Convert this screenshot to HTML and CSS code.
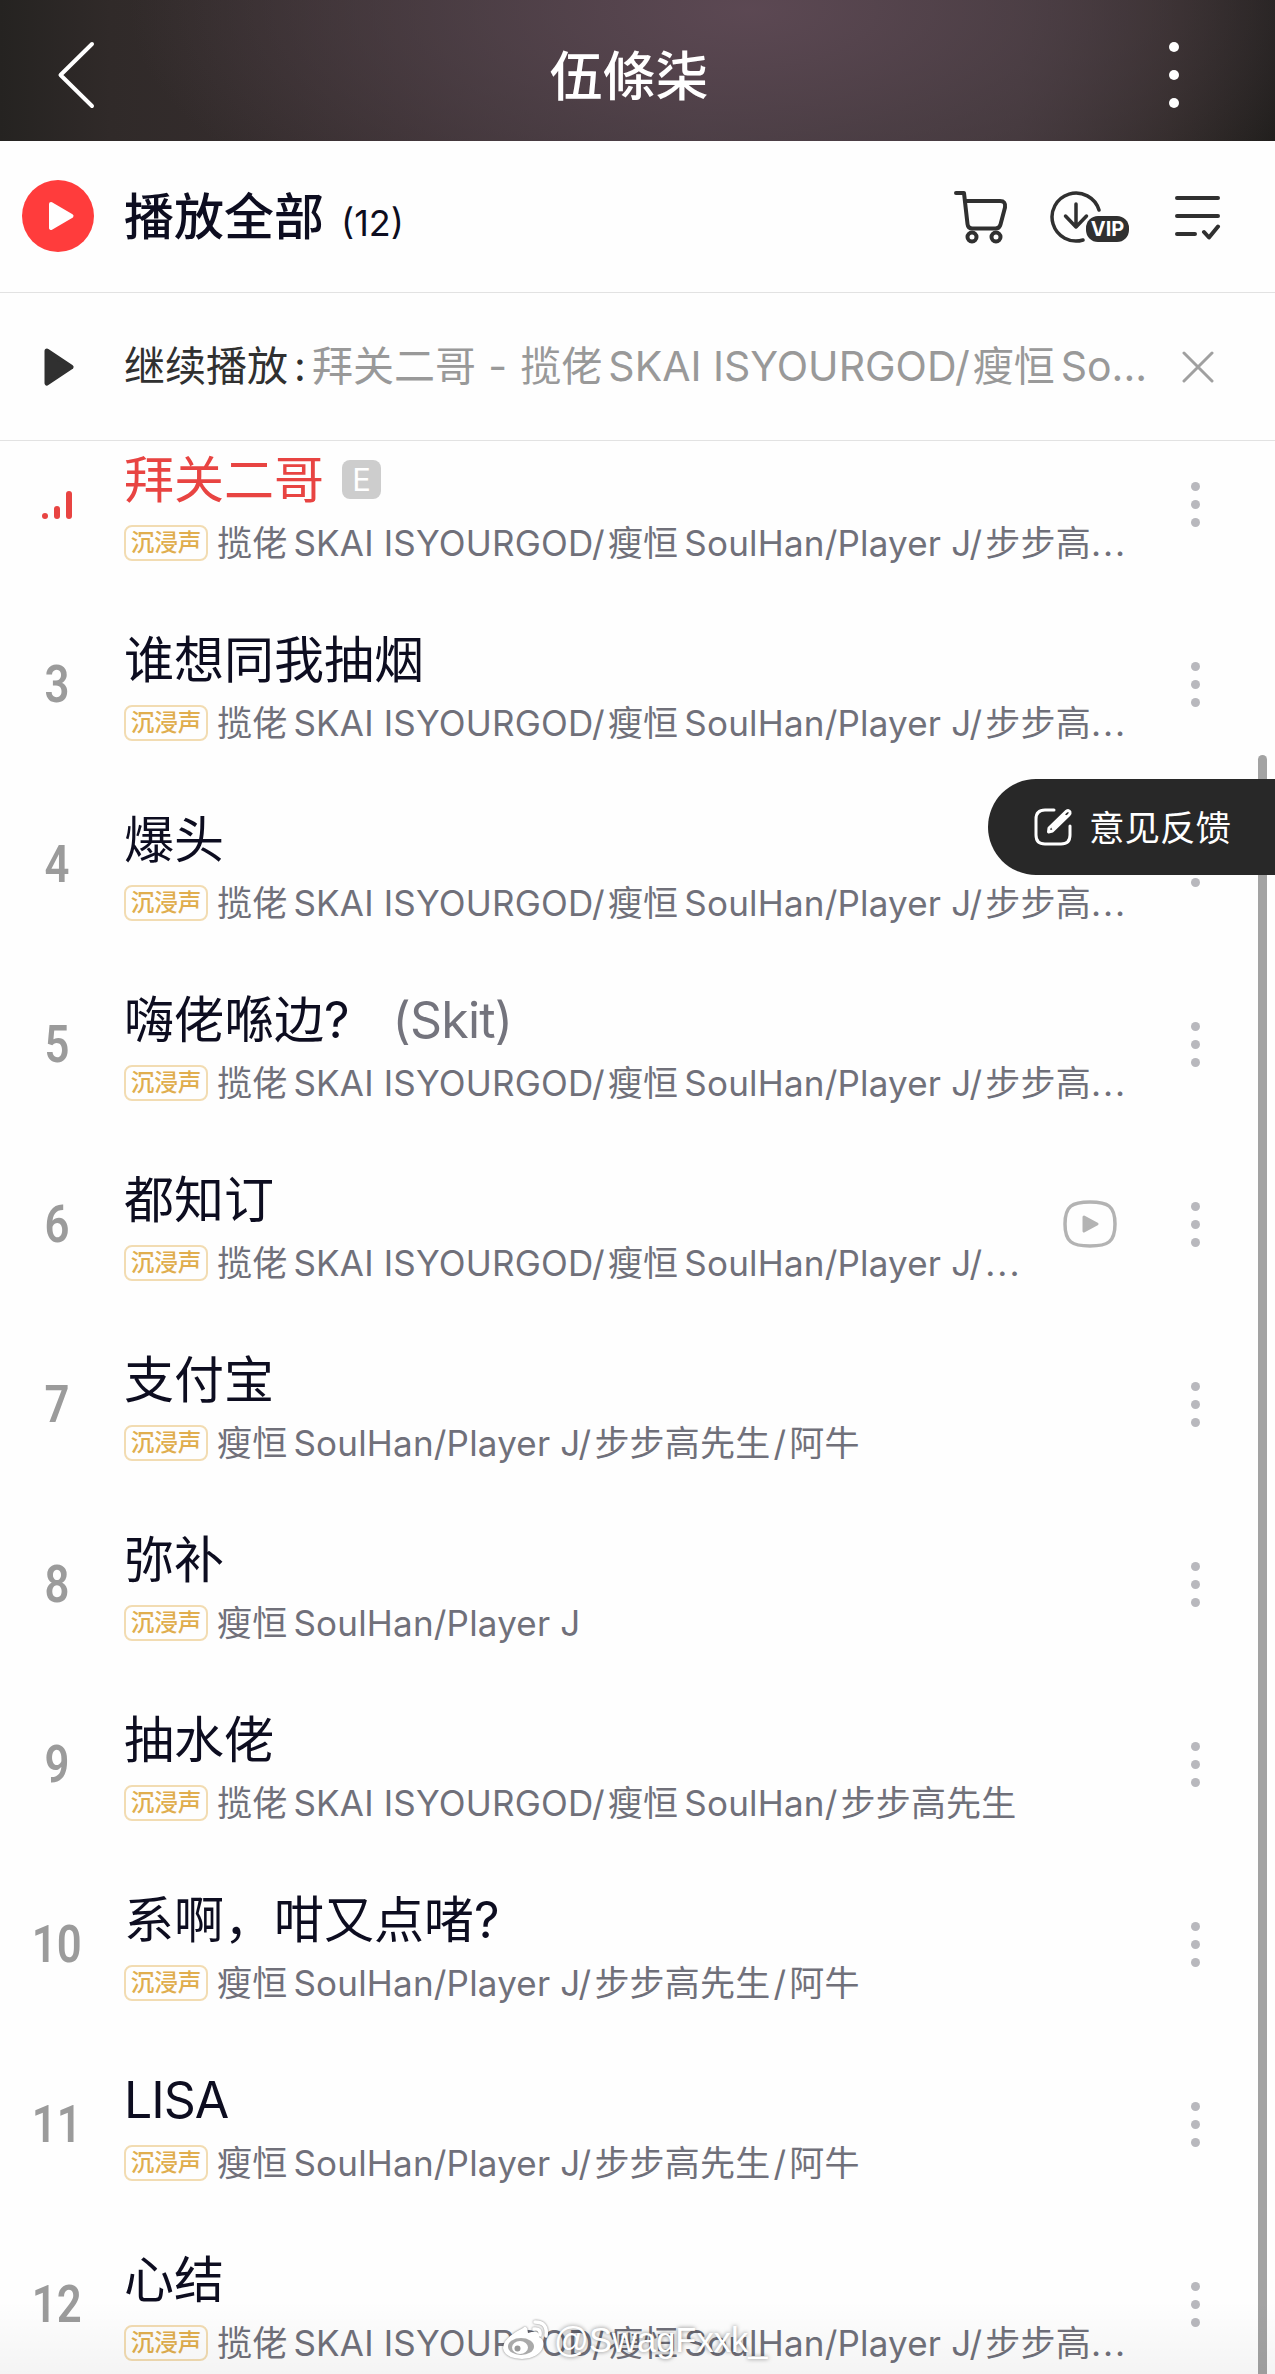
FILE: index.html
```html
<!DOCTYPE html>
<html lang="zh-CN">
<head>
  <meta charset="UTF-8" />
  <meta name="viewport" content="width=device-width, initial-scale=1.0"/>
  <title>伍條柒</title>
  <link rel="stylesheet" href="styles.css">
</head>
<body>
  <header class="header">
    <svg class="back" width="40" height="72" viewBox="0 0 40 72"><path d="M35 5 L3.500 36 L35 67"/></svg>
    <h1>伍條柒</h1>
    <div class="header-more"><i></i><i></i><i></i></div>
  </header>

  <div class="play-all">
    <svg class="play-btn" width="72" height="72" viewBox="0 0 72 72">
      <circle cx="36" cy="36" r="36" fill="#ff3c3c"/>
      <path d="M29 24 L49.500 36 L29 48 Z" fill="#fff" stroke="#fff" stroke-width="4" stroke-linejoin="round"/>
    </svg>
    <span class="play-label">播放全部</span>
    <span class="count">(12)</span>
    <div class="tools">
      <svg width="56" height="56" viewBox="0 0 56 56">
        <path d="M3 5 h8 l3.500 31 q.5 4.500 5 4.500 h23 q4 0 5 -4 l4.500 -17 q1 -6.500 -5 -6.500 h-35"/>
        <circle cx="19" cy="49" r="4.500"/>
        <circle cx="43" cy="49" r="4.500"/>
      </svg>
      <svg class="vip-download" width="80" height="56" viewBox="0 0 80 56">
        <path d="M49 22 A24 24 0 1 0 33 52"/>
        <path d="M26 16 v23 M15.500 28 L26 39 L36.500 28"/>
        <rect x="36" y="28" width="43" height="26" rx="12" fill="#303030" stroke="none"/>
        <text x="57.500" y="48" text-anchor="middle">VIP</text>
      </svg>
      <svg width="48" height="48" viewBox="0 0 48 48">
        <path d="M3 6 h41 M3 24 h41 M3 42 h18 M30 40 l5 5.500 L44 34.500"/>
      </svg>
    </div>
  </div>

  <div class="resume">
    <svg class="resume-play" width="30" height="38" viewBox="0 0 30 38"><path d="M3 3 L27 19 L3 35 Z"/></svg>
    <p>继续播放<b>:</b><span class="resume-song">拜关二哥<u> - </u>揽佬<i></i>SKAI ISYOURGOD/<s></s>瘦恒<i></i>So...</span></p>
    <svg class="close" width="32" height="32" viewBox="0 0 32 32"><path d="M2 2 L30 30 M30 2 L2 30"/></svg>
  </div>

  <ul class="songs">
    <li class="song playing">
      <div class="num"><span class="bar bar1"></span><span class="bar bar2"></span><span class="bar bar3"></span></div>
      <div class="info">
        <div class="title">拜关二哥<span class="explicit">E</span></div>
        <div class="artist"><span class="tag">沉浸声</span>揽佬<i></i>SKAI ISYOURGOD/<s></s>瘦恒<i></i>SoulHan/Player J/<s></s>步步高<span class="dots">...</span></div>
      </div>
      <div class="more"><i></i><i></i><i></i></div>
    </li>
    <li class="song">
      <div class="num"><span>3</span></div>
      <div class="info">
        <div class="title">谁想同我抽烟</div>
        <div class="artist"><span class="tag">沉浸声</span>揽佬<i></i>SKAI ISYOURGOD/<s></s>瘦恒<i></i>SoulHan/Player J/<s></s>步步高<span class="dots">...</span></div>
      </div>
      <div class="more"><i></i><i></i><i></i></div>
    </li>
    <li class="song">
      <div class="num"><span>4</span></div>
      <div class="info">
        <div class="title">爆头</div>
        <div class="artist"><span class="tag">沉浸声</span>揽佬<i></i>SKAI ISYOURGOD/<s></s>瘦恒<i></i>SoulHan/Player J/<s></s>步步高<span class="dots">...</span></div>
      </div>
      <div class="more"><i></i><i></i><i></i></div>
    </li>
    <li class="song">
      <div class="num"><span>5</span></div>
      <div class="info">
        <div class="title">嗨佬喺边?<span class="subtitle">(Skit)</span></div>
        <div class="artist"><span class="tag">沉浸声</span>揽佬<i></i>SKAI ISYOURGOD/<s></s>瘦恒<i></i>SoulHan/Player J/<s></s>步步高<span class="dots">...</span></div>
      </div>
      <div class="more"><i></i><i></i><i></i></div>
    </li>
    <li class="song">
      <div class="num"><span>6</span></div>
      <div class="info">
        <div class="title">都知订</div>
        <div class="artist"><span class="tag">沉浸声</span>揽佬<i></i>SKAI ISYOURGOD/<s></s>瘦恒<i></i>SoulHan/Player J/<s></s><span class="dots">...</span></div>
      </div>
      <svg class="mv" width="54" height="48" viewBox="0 0 54 48">
        <path d="M27 2 C45 2 52 6 52 24 C52 42 45 46 27 46 C9 46 2 42 2 24 C2 6 9 2 27 2 Z" fill="none" stroke="#b3b3b3" stroke-width="3.500"/>
        <path d="M21 17 L34 24 L21 31 Z" fill="#b3b3b3" stroke="#b3b3b3" stroke-width="3" stroke-linejoin="round"/>
      </svg>
      <div class="more"><i></i><i></i><i></i></div>
    </li>
    <li class="song">
      <div class="num"><span>7</span></div>
      <div class="info">
        <div class="title">支付宝</div>
        <div class="artist"><span class="tag">沉浸声</span>瘦恒<i></i>SoulHan/Player J/<s></s>步步高先生<s></s>/<s></s>阿牛</div>
      </div>
      <div class="more"><i></i><i></i><i></i></div>
    </li>
    <li class="song">
      <div class="num"><span>8</span></div>
      <div class="info">
        <div class="title">弥补</div>
        <div class="artist"><span class="tag">沉浸声</span>瘦恒<i></i>SoulHan/Player J</div>
      </div>
      <div class="more"><i></i><i></i><i></i></div>
    </li>
    <li class="song">
      <div class="num"><span>9</span></div>
      <div class="info">
        <div class="title">抽水佬</div>
        <div class="artist"><span class="tag">沉浸声</span>揽佬<i></i>SKAI ISYOURGOD/<s></s>瘦恒<i></i>SoulHan/<s></s>步步高先生</div>
      </div>
      <div class="more"><i></i><i></i><i></i></div>
    </li>
    <li class="song">
      <div class="num"><span>10</span></div>
      <div class="info">
        <div class="title">系啊，咁又点啫?</div>
        <div class="artist"><span class="tag">沉浸声</span>瘦恒<i></i>SoulHan/Player J/<s></s>步步高先生<s></s>/<s></s>阿牛</div>
      </div>
      <div class="more"><i></i><i></i><i></i></div>
    </li>
    <li class="song">
      <div class="num"><span>11</span></div>
      <div class="info">
        <div class="title latin">LISA</div>
        <div class="artist"><span class="tag">沉浸声</span>瘦恒<i></i>SoulHan/Player J/<s></s>步步高先生<s></s>/<s></s>阿牛</div>
      </div>
      <div class="more"><i></i><i></i><i></i></div>
    </li>
    <li class="song">
      <div class="num"><span>12</span></div>
      <div class="info">
        <div class="title">心结</div>
        <div class="artist"><span class="tag">沉浸声</span>揽佬<i></i>SKAI ISYOURGOD/<s></s>瘦恒<i></i>SoulHan/Player J/<s></s>步步高<span class="dots">...</span></div>
      </div>
      <div class="more"><i></i><i></i><i></i></div>
    </li>
  </ul>

  <div class="scrollbar"></div>
  <div class="feedback">
    <svg width="40" height="40" viewBox="0 0 40 40">
      <path d="M21 3 H12 Q3 3 3 12 V28 Q3 37 12 37 H28 Q37 37 37 28 V19"/>
      <path d="M16 21 L33 4.500 Q36 2.500 37 5 Q37.500 6.500 36 8 L19.500 24 L15.500 25 Z M20 21 L32 9"/>
    </svg>
    <span>意见反馈</span>
  </div>
  <div class="bottom-fade"></div>
  <div class="watermark">
    <svg width="48" height="42" viewBox="0 0 48 42">
      <path d="M21 9 Q25 5 26 14 Q38 10 37 18 Q43 21 41 28 Q37 39 20 40 Q2 39 1 29 Q1 19 21 9 Z" fill="#fff"/>
      <ellipse cx="19" cy="27.500" rx="13" ry="8.500" fill="#aaa"/>
      <ellipse cx="18" cy="28.500" rx="8" ry="6.500" fill="#fff"/>
      <circle cx="15.500" cy="29.500" r="3" fill="#999"/>
      <path d="M33 3 Q46 3 44 17 M32 10 Q39 9 38 16" fill="none" stroke="#fff" stroke-width="3.500" stroke-linecap="round"/>
    </svg>
    <span>@SwagFxxk_</span>
  </div>
</body>
</html>
```
FILE: styles.css
```css
* {
  box-sizing: border-box;
}

body {
  position: relative;
  margin: 0;
  width: 1275px;
  height: 2374px;
  overflow: hidden;
  background: #fefefe;
  color: #0d0d20;
  font-family: Inter, "Noto Sans CJK SC", sans-serif;
}

.header {
  height: 141px;
  padding: 9px 96px 0 57px;
  display: flex;
  align-items: center;
  justify-content: space-between;
  background:
    radial-gradient(ellipse 620px 260px at 750px 10px, rgba(93, 73, 84, 0.95), rgba(82, 67, 75, 0.65) 50%, rgba(64, 52, 56, 0)),
    linear-gradient(90deg, #252321 0, #302a29 110px, #392f31 400px, #44383e 700px, #3c3335 1020px, #2e2826 1170px, #201e1c 1275px);
}

.back {
  fill: none;
  stroke: #fff;
  stroke-width: 4;
  stroke-linecap: round;
  stroke-linejoin: round;
}

.header h1 {
  margin: 3px 0 0 -8px;
  color: #fff;
  font-size: 53px;
  font-weight: 500;
  line-height: 60px;
}

.header-more,
.more {
  display: flex;
  flex-direction: column;
}

.header-more {
  gap: 18px;
}

.header-more i {
  width: 10px;
  height: 10px;
  border-radius: 50%;
  background: #fff;
}

.play-all {
  height: 152px;
  padding: 0 53px 2px 22px;
  display: flex;
  align-items: center;
  border-bottom: 1px solid #e2e2e2;
}

.play-label {
  margin: 2px 0 0 30px;
  font-size: 50px;
  font-weight: 500;
  line-height: 60px;
}

.count {
  margin: 14px 0 0 17px;
  font-size: 36px;
  line-height: 44px;
}

.tools {
  margin-left: auto;
  display: flex;
  align-items: center;
}

.tools svg {
  fill: none;
  stroke: #303030;
  stroke-width: 4;
  stroke-linecap: round;
  stroke-linejoin: round;
}

.tools .vip-download {
  margin: 0 44px 0 41px;
  stroke-width: 3.5;
}

.vip-download text {
  fill: #fff;
  stroke: none;
  font-size: 20px;
  font-weight: 700;
}

.resume {
  height: 148px;
  padding: 0 61px 0 44px;
  display: flex;
  align-items: center;
  border-bottom: 1px solid #e2e2e2;
}

.resume-play path {
  fill: #303030;
  stroke: #303030;
  stroke-width: 5;
  stroke-linejoin: round;
}

.resume p {
  margin: 0 0 2px 50px;
  width: 1056px;
  color: #303030;
  font-size: 41px;
  line-height: 56px;
  white-space: nowrap;
}

.resume b {
  display: inline-block;
  width: 24px;
  padding-left: 6px;
  font-weight: 400;
}

.resume-song {
  color: #999;
}

.resume u {
  text-decoration: none;
  white-space: pre;
  letter-spacing: 0.8px;
}

/* small gaps between Chinese and Latin text */
.resume-song i,
.artist i {
  display: inline-block;
  width: 6px;
}

.resume-song s,
.artist s {
  display: inline-block;
  width: 3px;
}

.close {
  margin-left: auto;
  fill: none;
  stroke: #a0a0a0;
  stroke-width: 3;
  stroke-linecap: round;
}

.songs {
  list-style: none;
  margin: 0;
  padding: 0;
}

.song {
  height: 180px;
  padding-right: 75px;
  display: flex;
  align-items: center;
}

.song.playing {
  margin-top: -27px;
}

.num {
  width: 114px;
  padding-top: 2px;
  display: flex;
  justify-content: center;
  color: #9b9b9b;
  font-family: Roboto, sans-serif;
  font-size: 52px;
  font-weight: 600;
  line-height: 60px;
}

.num span {
  transform: scaleX(0.84);
}

.playing .num {
  align-items: flex-end;
  gap: 6px;
  height: 30px;
}

.num .bar {
  width: 6px;
  border-radius: 3px;
  background: #e84442;
  transform: none;
}

.bar1 { height: 6px; }
.bar2 { height: 13px; }
.bar3 { height: 28px; }

.info {
  flex: 1;
  padding: 11px 0 0 10px;
}

.title {
  height: 66px;
  display: flex;
  align-items: center;
  font-size: 50px;
  line-height: 66px;
}

.title.latin {
  letter-spacing: -1px;
}

.playing .title {
  color: #e84442;
}

.explicit {
  width: 39px;
  height: 39px;
  margin-left: 18px;
  border-radius: 8px;
  background: #cdcdcd;
  color: #fff;
  font-size: 31px;
  line-height: 39px;
  text-align: center;
}

.subtitle {
  margin-left: 43px;
  color: #74747d;
  letter-spacing: -0.8px;
}

.artist {
  height: 60px;
  display: flex;
  align-items: center;
  color: #70707a;
  font-size: 35px;
  letter-spacing: 0.2px;
  line-height: 60px;
  white-space: pre;
}

.dots {
  letter-spacing: 2px;
}

.tag {
  width: 84px;
  height: 36px;
  margin-right: 9px;
  border: 2px solid #f2dcb2;
  border-radius: 8px;
  color: #e0ae4e;
  font-size: 23.500px;
  font-weight: 500;
  letter-spacing: 0;
  line-height: 31px;
  text-align: center;
}

.mv {
  margin-right: 74px;
}

.more {
  gap: 9px;
}

.more i {
  width: 9px;
  height: 9px;
  border-radius: 50%;
  background: #b8b8bd;
}

.scrollbar {
  position: absolute;
  top: 755px;
  right: 8px;
  bottom: -10px;
  width: 9px;
  border-radius: 5px;
  background: #a3a3a3;
}

.feedback {
  position: absolute;
  top: 779px;
  right: 0;
  width: 287px;
  height: 96px;
  padding-left: 45px;
  display: flex;
  align-items: center;
  gap: 16px;
  border-radius: 48px 0 0 48px;
  background: #282828;
  color: #fff;
  font-size: 35.5px;
}

.feedback span {
  padding-bottom: 3px;
}

.feedback svg {
  fill: none;
  stroke: #fff;
  stroke-width: 3;
  stroke-linecap: round;
  stroke-linejoin: round;
}

.bottom-fade {
  position: absolute;
  left: 0;
  right: 0;
  bottom: 0;
  height: 74px;
  background: linear-gradient(rgba(0, 0, 0, 0), rgba(0, 0, 0, 0.04));
}

.watermark {
  position: absolute;
  left: 502px;
  top: 2319px;
  display: flex;
  align-items: center;
  gap: 4px;
  color: #fff;
  font-family: "Liberation Sans", sans-serif;
  font-size: 34.500px;
  line-height: 42px;
  text-shadow: 0 0 4px rgba(0, 0, 0, 0.5);
}

.watermark svg {
  filter: drop-shadow(0 0 1px rgba(0, 0, 0, 0.5));
}
```
